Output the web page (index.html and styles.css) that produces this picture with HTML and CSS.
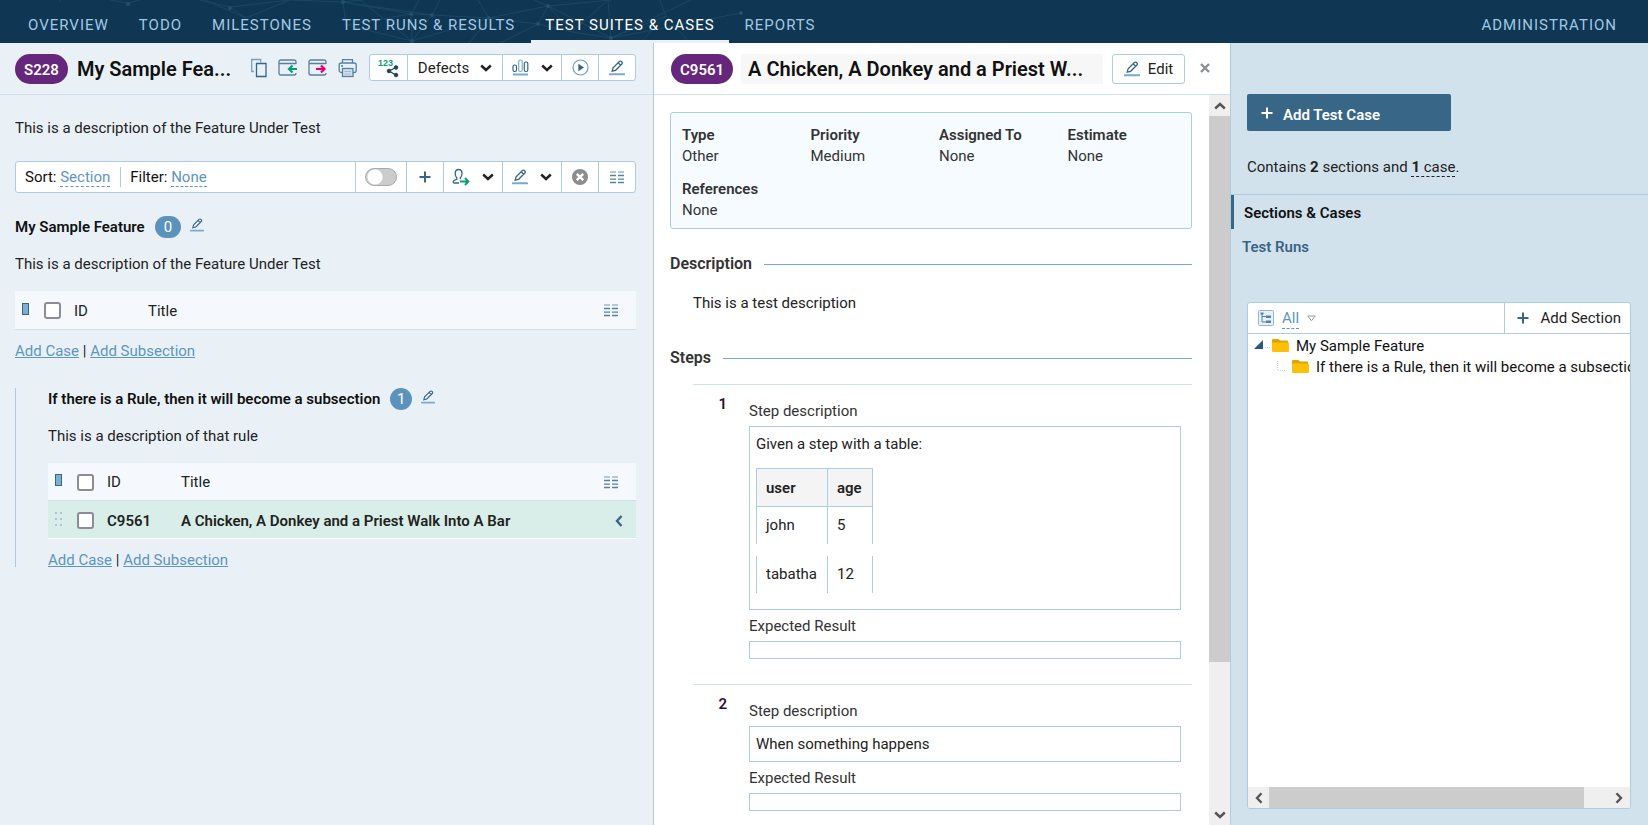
FILE: index.html
```html
<!DOCTYPE html>
<html lang="en">
<head>
<meta charset="utf-8">
<title>My Sample Feature</title>
<link rel="stylesheet" href="styles.css">
</head>
<body>
<svg class="sprite" aria-hidden="true">
  <symbol id="pencil" viewBox="0 0 16 16"><path d="M3.200 11.200l.9-3.400 6.300-6.300a1.400 1.400 0 0 1 2 0l.5.5a1.400 1.400 0 0 1 0 2l-6.300 6.300zM9.200 2.800l2.400 2.400" fill="none" stroke="#376687" stroke-width="1.300"/><path d="M.8 14.300h14.400" stroke="#79aacf" stroke-width="2" stroke-linecap="round"/></symbol>
  <symbol id="chev" viewBox="0 0 12 8"><path d="M1.200 1.500L6 6l4.800-4.500" fill="none" stroke="currentColor" stroke-width="2.400"/></symbol>
  <symbol id="plus" viewBox="0 0 12 12"><path d="M6 .5v11M.5 6h11" stroke="currentColor" stroke-width="2"/></symbol>
  <symbol id="cols" viewBox="0 0 14 13"><path d="M0 1h6M8 1h6" stroke="#9db9cd" stroke-width="1.500"/><path d="M0 4.500h6M8 4.500h6M0 8.200h6M8 8.200h6M0 11.500h6M8 11.500h6" stroke="#56819f" stroke-width="1.300"/></symbol>
  <symbol id="folder" viewBox="0 0 17 13"><path d="M0 1.200Q0 0 1 0h5.500L8 1.500h7q1 0 1 1V5H0z" fill="#dba507"/><path d="M0 3.500h16q1 0 1 1V12q0 1-1 1H1q-1 0-1-1z" fill="#fdc005"/></symbol>
</svg>

<header class="topbar">
  <svg class="mesh" viewBox="0 0 745 43" aria-hidden="true">
    <g fill="none" stroke="#235270" stroke-width="1">
      <path d="M60 0v2M110 0l18 3 12-3M200 0l30 7 60-7M205 0l41 18 44-18M230 7l16 11M290 0l53 2 20-2M343 2l68 12 21 1 57 3 49 6M343 2l3 23 66 16M343 2l89 13M346 25l65-11 8-14M411 14l1 27 20-26M412 41L360 0M412 41l77-23M432 15l8-15M489 18l59-12 63 32M489 18L478 0M489 18l-20 25M538 24l34 8 39 6M538 24l10-18 24 26 36-32M548 6l63-6M548 6l-14-6M611 38l130-25M611 38l80-38M611 38L608 0M611 38l55-22 24 27M666 16L660 0M666 16l-26 27M500 43l38-19"/>
    </g>
    <g fill="#2e6184"><circle cx="128" cy="4" r="2"/><circle cx="230" cy="8" r="2"/><circle cx="343" cy="2" r="2"/><circle cx="411" cy="14" r="2"/><circle cx="432" cy="15" r="2"/><circle cx="412" cy="41" r="2"/><circle cx="489" cy="18" r="2"/><circle cx="538" cy="24" r="2"/><circle cx="548" cy="6" r="2"/><circle cx="611" cy="38" r="2"/><circle cx="741" cy="13" r="2"/></g>
  </svg>
  <nav class="nav">
    <a href="#">OVERVIEW</a><a href="#">TODO</a><a href="#">MILESTONES</a><a href="#">TEST RUNS &amp; RESULTS</a><a href="#" class="current">TEST SUITES &amp; CASES</a><a href="#">REPORTS</a>
  </nav>
  <nav class="nav"><a href="#">ADMINISTRATION</a></nav>
</header>

<main class="columns">
  <section class="suite">
    <div class="bar">
      <span class="tag">S228</span>
      <h1>My Sample Fea...</h1>
      <div class="tools">
        <button aria-label="Copy"><svg width="18" height="20" viewBox="0 0 18 20"><g fill="none" stroke="#376687" stroke-width="1.300"><path d="M4 13.500H1.700V1.500h9v3" stroke="#79a0bd"/><path d="M6.500 5.500h9.500v13H6.500z"/></g></svg></button>
        <button aria-label="Import"><svg width="20" height="18" viewBox="0 0 20 18"><path d="M18 5V3q0-2-2-2H3Q1 1 1 3v11q0 2 2 2h13q2 0 2-2M1 4.500h17" fill="none" stroke="#56819f" stroke-width="1.300"/><path d="M19 10h-7M14.500 6.500L11 10l3.500 3.500" fill="none" stroke="#0b9c78" stroke-width="2.200"/></svg></button>
        <button aria-label="Export"><svg width="20" height="18" viewBox="0 0 20 18"><path d="M18 5V3q0-2-2-2H3Q1 1 1 3v11q0 2 2 2h13q2 0 2-2M1 4.500h17" fill="none" stroke="#56819f" stroke-width="1.300"/><path d="M8 10h8M13 6.500l3.500 3.500-3.500 3.500" fill="none" stroke="#e8006e" stroke-width="2.200"/></svg></button>
        <button aria-label="Print"><svg width="20" height="20" viewBox="0 0 20 20"><g fill="none" stroke="#56819f" stroke-width="1.300"><path d="M4.500 5V1.700h10V5"/><rect x="1.200" y="5" width="17" height="9.500" rx="2"/><rect x="4.500" y="10.500" width="10.500" height="8" fill="#cfe0ec"/></g><path d="M6.500 13.500h6.500M6.500 16h6.500" stroke="#9dbbd2"/><circle cx="4" cy="8" r="1" fill="#0b9c78"/></svg></button>
      </div>
      <div class="group">
        <button class="cell" aria-label="Numbering"><svg width="22" height="20" viewBox="0 0 22 20"><text x="0" y="8" class="digits">123</text><g fill="#23455c" stroke="#23455c"><circle cx="11" cy="13" r="1.800"/><circle cx="18" cy="9.500" r="1.800"/><circle cx="18" cy="17" r="1.800"/><path d="M18 9.500L11 13l7 4" fill="none" stroke-width="1.300"/></g></svg></button>
        <button class="cell wide">Defects<svg width="12" height="8"><use href="#chev"/></svg></button>
        <button class="cell mid" aria-label="Statistics"><svg width="17" height="17" viewBox="0 0 17 17"><g fill="none" stroke="#376687" stroke-width="1.200"><rect x="1" y="6" width="3.500" height="6.500" rx="1.500"/><rect x="6.700" y="1" width="3.500" height="11.500" rx="1.500" stroke="#79aacf"/><rect x="12.300" y="3" width="3.500" height="9.500" rx="1.500"/></g><path d="M1 15.500h15" stroke="#79aacf" stroke-width="2"/></svg><svg width="12" height="8"><use href="#chev"/></svg></button>
        <button class="cell" aria-label="Run test"><svg width="17" height="17" viewBox="0 0 17 17"><circle cx="8.500" cy="8.500" r="7.500" fill="none" stroke="#6b9fc4" stroke-width="1.200"/><path d="M6.300 4.700l5.700 3.800-5.700 3.800z" fill="#376687"/></svg></button>
        <button class="cell" aria-label="Edit suite"><svg width="16" height="16"><use href="#pencil"/></svg></button>
      </div>
    </div>

    <div class="suite-body">
      <p>This is a description of the Feature Under Test</p>
      <div class="group filterbar">
        <div class="filters"><span>Sort: <a href="#">Section</a></span><span class="split">Filter: <a href="#">None</a></span></div>
        <label class="cell toggle" aria-label="Show details"><input type="checkbox"><span></span></label>
        <button class="cell ink" aria-label="Add"><svg width="12" height="12"><use href="#plus"/></svg></button>
        <button class="cell mid" aria-label="Assign"><svg width="18" height="18" viewBox="0 0 18 18"><path d="M7 15H2.500Q1 15 1.300 13.300 1.800 12 4.800 11.300V9.800Q3.200 8.200 3.200 5.500 3.200 1.500 6.600 1.500T10 5.500Q10 8.200 8.400 9.800v1.400" fill="none" stroke="#376687" stroke-width="1.300"/><path d="M8 13.500h8M13 10l3.300 3.500L13 17" fill="none" stroke="#0b9c78" stroke-width="2"/></svg><svg width="12" height="8"><use href="#chev"/></svg></button>
        <button class="cell mid" aria-label="Edit cases"><svg width="16" height="16"><use href="#pencil"/></svg><svg width="12" height="8"><use href="#chev"/></svg></button>
        <button class="cell" aria-label="Clear"><svg width="16" height="16" viewBox="0 0 16 16"><circle cx="8" cy="8" r="8" fill="#8d8d8d"/><path d="M4.800 4.800l6.400 6.400M11.200 4.800l-6.400 6.400" stroke="#fff" stroke-width="2.400"/></svg></button>
        <button class="cell" aria-label="Columns"><svg width="14" height="13"><use href="#cols"/></svg></button>
      </div>

      <div class="head"><h2>My Sample Feature</h2><span class="count">0</span><button aria-label="Edit section"><svg width="14" height="14"><use href="#pencil"/></svg></button></div>
      <p>This is a description of the Feature Under Test</p>
      <table class="cases">
        <thead><tr><th class="c-grip"><i class="handle"></i></th><th class="c-check"><input type="checkbox" aria-label="Select all"></th><th class="c-id">ID</th><th>Title</th><th class="c-end"><svg width="14" height="13"><use href="#cols"/></svg></th></tr></thead>
      </table>
      <div class="links"><a href="#">Add Case</a> | <a href="#">Add Subsection</a></div>

      <section class="sub">
        <div class="head"><h2>If there is a Rule, then it will become a subsection</h2><span class="count">1</span><button aria-label="Edit section"><svg width="14" height="14"><use href="#pencil"/></svg></button></div>
        <p>This is a description of that rule</p>
        <table class="cases">
          <thead><tr><th class="c-grip"><i class="handle"></i></th><th class="c-check"><input type="checkbox" aria-label="Select all"></th><th class="c-id">ID</th><th>Title</th><th class="c-end"><svg width="14" height="13"><use href="#cols"/></svg></th></tr></thead>
          <tbody><tr><td class="c-grip"><svg width="8" height="14" viewBox="0 0 8 14"><g fill="#a9c6de"><path d="M0 0h2v2H0zM5 0h2v2H5zM0 6h2v2H0zM5 6h2v2H5zM0 12h2v2H0zM5 12h2v2H5z"/></g></svg></td><td><input type="checkbox" aria-label="Select C9561"></td><td>C9561</td><td>A Chicken, A Donkey and a Priest Walk Into A Bar</td><td class="c-end open"><svg width="8" height="12" viewBox="0 0 8 12"><path d="M6.500 1L2 6l4.500 5" fill="none" stroke="#376687" stroke-width="2.400"/></svg></td></tr></tbody>
        </table>
        <div class="links"><a href="#">Add Case</a> | <a href="#">Add Subsection</a></div>
      </section>
    </div>
  </section>

  <section class="case">
    <div class="bar">
      <span class="tag">C9561</span>
      <h1 class="case-title">A Chicken, A Donkey and a Priest W...</h1>
      <button class="edit"><svg width="16" height="16"><use href="#pencil"/></svg>Edit</button>
      <button class="close" aria-label="Close"><svg width="10" height="10" viewBox="0 0 10 10"><path d="M1 1l8 8M9 1L1 9" stroke="#8b8f92" stroke-width="2.400"/></svg></button>
    </div>
    <div class="case-view">
      <div class="case-body">
        <dl class="facts">
          <div><dt>Type</dt><dd>Other</dd></div><div><dt>Priority</dt><dd>Medium</dd></div><div><dt>Assigned To</dt><dd>None</dd></div><div><dt>Estimate</dt><dd>None</dd></div><div><dt>References</dt><dd>None</dd></div>
        </dl>
        <h3>Description</h3>
        <p class="text">This is a test description</p>
        <h3>Steps</h3>
        <ol class="steps">
          <li><b>1</b><div>
            <h4>Step description</h4>
            <div class="box"><p>Given a step with a table:</p>
              <div class="grids">
                <table class="grid"><thead><tr><th>user</th><th>age</th></tr></thead><tbody><tr><td>john</td><td>5</td></tr><tr class="spacer"></tr><tr><td>tabatha</td><td>12</td></tr></tbody></table>
              </div></div>
            <h4>Expected Result</h4><div class="box"></div>
          </div></li>
          <li><b>2</b><div>
            <h4>Step description</h4>
            <div class="box"><p>When something happens</p></div>
            <h4>Expected Result</h4><div class="box"></div>
          </div></li>
        </ol>
      </div>
      <div class="scroll vertical"><span><svg width="12" height="8"><use href="#chev"/></svg></span><i></i><span><svg width="12" height="8"><use href="#chev"/></svg></span></div>
    </div>
  </section>

  <aside class="side">
    <button class="add"><svg width="12" height="12"><use href="#plus"/></svg><span>Add Test Case</span></button>
    <p>Contains <b>2</b> sections and <span class="dotted"><b>1</b> case</span>.</p>
    <nav class="menu"><a href="#" class="current">Sections &amp; Cases</a><a href="#">Test Runs</a></nav>
    <div class="tree">
      <div class="tree-bar">
        <div class="scope"><svg width="16" height="16" viewBox="0 0 16 16"><rect x=".5" y=".5" width="15" height="15" rx="1" fill="#e9f1f8" stroke="#8fb6d3"/><path d="M4 3v9h4M4 6.500h4" fill="none" stroke="#56819f"/><path d="M2.500 2.500h3v2h-3zM8 5.500h5v2.500H8zM8 10.500h5V13H8z" fill="#56819f"/></svg><a href="#">All</a><svg width="9" height="7" viewBox="0 0 9 7"><path d="M.8 1h7.400L4.500 5.800z" fill="none" stroke="#999"/></svg></div>
        <button><svg width="12" height="12"><use href="#plus"/></svg>Add Section</button>
      </div>
      <ul>
        <li><svg width="18" height="12" viewBox="0 0 18 12"><path d="M9 0v9H0z" fill="#2a5878"/><path d="M11 7.500h6" stroke="#c3d5e4" stroke-dasharray="1 1"/></svg><svg width="17" height="13"><use href="#folder"/></svg>My Sample Feature</li>
        <li class="child"><svg width="18" height="12" viewBox="0 0 18 12"><path d="M3.500 0v9.500h8" fill="none" stroke="#c3d5e4" stroke-dasharray="1 1"/></svg><svg width="17" height="13"><use href="#folder"/></svg>If there is a Rule, then it will become a subsection</li>
      </ul>
      <div class="scroll horizontal"><span><svg width="12" height="8"><use href="#chev"/></svg></span><i></i><span><svg width="12" height="8"><use href="#chev"/></svg></span></div>
    </div>
  </aside>
</main>
</body>
</html>
```
FILE: styles.css
```css
* { box-sizing: border-box; }
body { margin: 0; height: 100vh; display: flex; flex-direction: column; overflow: hidden; font: 15px/20px Roboto, "Liberation Sans", sans-serif; color: #222; background: #e9f1f7; }
h1, h2, h3, h4, p, dl, dd, ol, ul { margin: 0; padding: 0; list-style: none; }
button { font: inherit; color: inherit; background: none; border: 0; padding: 0; display: flex; align-items: center; }
svg { flex: none; display: block; }
.sprite { position: absolute; width: 0; height: 0; }

.topbar { position: relative; flex: none; height: 43px; background: #0f3753; display: flex; justify-content: space-between; padding: 0 17px 0 14px; }
.mesh { position: absolute; left: 0; top: 0; width: 745px; height: 43px; opacity: .6; }
.nav { position: relative; display: flex; gap: 2px; }
.nav a { display: flex; align-items: center; padding: 10px 14px 0; color: #a3c8e3; text-decoration: none; letter-spacing: 1px; border-bottom: 3px solid transparent; }
.nav a.current { color: #fff; border-color: #e9f1f7; }

.columns { flex: 1; min-height: 0; display: grid; grid-template-columns: minmax(0, 654fr) minmax(0, 577fr) minmax(0, 417fr); }
.suite { border-right: 1px solid #aecbe0; }
.bar { height: 52px; display: flex; align-items: flex-start; padding: 11px 17px 0 15px; border-bottom: 1px solid #cfe0ec; }
.tag { flex: none; height: 30px; padding: 0 9px; border-radius: 15px; background: #66267b; color: #fff; font-weight: 600; line-height: 32px; }
h1 { font-size: 20px; line-height: 30px; font-weight: 600; color: #111; white-space: nowrap; overflow: hidden; text-overflow: ellipsis; }
.suite h1 { flex: 1; min-width: 0; margin: 0 10px 0 9px; }
.tools { display: flex; gap: 10px; height: 28px; margin-right: 11px; }

.group { display: flex; background: #fff; border: 1px solid #aecbe0; border-radius: 3px; height: 27px; }
.cell { width: 37px; justify-content: center; border-left: 1px solid #aecbe0; gap: 12px; display: flex; align-items: center; }
.cell:first-child { border-left: 0; }
.cell.wide { width: 95px; gap: 11px; }
.cell.mid { width: 59px; }
.cell.ink { color: #376687; }
.digits { font: 700 9px "Liberation Sans", sans-serif; fill: #0b9c78; }

.suite-body { padding: 23px 17px 0 15px; }
.filterbar { height: 32px; margin: 23px 0; }
.filters { flex: 1; display: flex; align-items: center; padding-left: 9px; color: #111; }
.split { margin-left: 10px; padding-left: 9px; border-left: 1px solid #aecbe0; }
.filters a, .scope a { color: #5d96c0; text-decoration: none; border-bottom: 1px dashed #5d96c0; }
.toggle { width: 51px; }
.toggle input { position: absolute; opacity: 0; }
.toggle span { width: 32px; height: 18px; border: 1px solid #aaa; border-radius: 9px; background: radial-gradient(circle at 9px 8px, #fff 7px, #ccc 8px); }

.head { display: flex; align-items: center; height: 22px; }
h2 { font-size: 15px; font-weight: 600; color: #111; }
.count { margin: 0 9px 0 10px; min-width: 22px; height: 22px; padding: 0 9px; border-radius: 11px; background: #5b93bd; color: #fff; text-align: center; line-height: 22px; }
.sub .count { padding: 0; }
.head button { padding-bottom: 4px; }
.head + p { margin: 16px 0 17px; }
.cases { width: 100%; border-collapse: collapse; table-layout: fixed; }
.cases th, .cases td { height: 38px; padding: 2px 0 0; text-align: left; font-weight: 400; border-bottom: 1px solid #cfe0ec; }
.cases th { background: #f5f9fd; }
.cases td { background: #d9eee9; font-weight: 600; border-color: #fff; }
.cases .c-grip { width: 29px; padding: 0 0 2px 7px; }
.c-check { width: 30px; }
.c-id { width: 74px; }
.cases .c-end { width: 40px; padding-left: 8px; }
.cases .open { padding-left: 19px; }
.handle { display: block; width: 7px; height: 12px; background: #7fafd0; border: 1px solid #376687; }
.cases input { appearance: none; display: block; margin: 0; width: 17px; height: 17px; border: 2px solid #8d8a9a; border-radius: 3px; background: #fff; }
.links { margin-top: 14px; line-height: 14px; }
.links a { color: #5d96c0; }
.sub { margin-top: 30px; padding-left: 32px; border-left: 1px solid #aecbe0; }

.case { background: #fff; border-right: 1px solid #aecbe0; display: flex; flex-direction: column; min-height: 0; }
.case .bar { flex: none; padding: 11px 20px 0 17px; }
.case-title { flex: 1; min-width: 0; margin: 0 9px 0 8px; padding: 0 7px; background: #f7f7f7; }
.edit { height: 30px; width: 73px; justify-content: center; gap: 8px; border: 1px solid #aecbe0; border-radius: 3px; }
.close { height: 28px; margin-left: 15px; }
.case-view { flex: 1; min-height: 0; display: flex; }
.case-body { flex: 1; min-width: 0; overflow: hidden; padding: 17px 17px 0 16px; }
.facts { display: grid; grid-template-columns: repeat(4, 1fr); gap: 12px 5px; padding: 12px 0 7px 11px; border: 1px solid #aecbe0; border-radius: 3px; background: #f5fbff; color: #333; }
.facts dt { font-weight: 600; line-height: 21px; }
.facts dd { line-height: 21px; }
h3 { display: flex; align-items: center; gap: 12px; font-size: 16px; font-weight: 600; color: #333; margin: 25px 0 0; }
h3::after { content: ""; flex: 1; height: 1px; background: #79aacf; }
.text { padding: 19px 0 10px 23px; }
.steps { padding: 16px 0 0 23px; }
.steps li { display: flex; padding: 9px 11px 25px 0; border-top: 1px solid #cfe0ec; }
.steps b { flex: none; width: 34px; text-align: right; color: #301030; margin-right: 22px; font-weight: 600; }
.steps li > div { flex: 1; min-width: 0; padding-top: 7px; }
h4 { font-size: 15px; font-weight: 400; color: #333; margin-bottom: 5px; }
.box { min-height: 18px; border: 1px solid #aecbe0; padding: 0 6px; margin-bottom: 6px; }
.box:last-child { margin-bottom: 0; }
.box p { padding: 7px 0; }
.grids { padding: 7px 0 16px; }
.grid { border-collapse: collapse; color: #222; }
.grid th, .grid td { height: 37px; padding: 0 10px 0 9px; text-align: left; border: 1px solid #aecbe0; }
.grid th { background: #f4f4f4; font-weight: 600; height: 38px; }
.grid td { border-bottom: 0; }
.grid tr + tr td { border-top: 0; }
.grid .spacer { height: 12px; }

.scroll { display: flex; background: #efefef; color: #555; flex: none; }
.scroll span { width: 21px; height: 21px; display: flex; align-items: center; justify-content: center; }
.scroll i { background: #ccc; }
.vertical { flex-direction: column; width: 21px; }
.vertical i { flex: 546; }
.vertical span:last-child { flex: 163; align-items: flex-end; }
.vertical span:last-child svg { margin-bottom: 6px; }
.vertical span:first-child svg { transform: rotate(180deg); }
.horizontal i { flex: 315; }
.horizontal span:last-child { flex: 46; justify-content: flex-end; }
.horizontal span:first-child svg { transform: rotate(90deg); }
.horizontal span:last-child svg { transform: rotate(-90deg); margin-right: 5px; }

.side { background: #d2e2ed; display: flex; flex-direction: column; min-height: 0; padding: 51px 0 16px; }
.add { height: 37px; width: 204px; margin-left: 16px; flex: none; gap: 10px; padding: 0 14px; border-radius: 2px; background: #376687; color: #fff; font-weight: 600; }
.add span { padding-top: 4px; }
.side p { padding: 26px 16px 17px; }
.dotted { border-bottom: 1px dashed #222; }
.menu { border-top: 1px solid #aecbe0; display: flex; flex-direction: column; font-weight: 600; }
.menu a { height: 34px; line-height: 36px; padding-left: 11px; color: #376687; text-decoration: none; }
.menu .current { color: #111; border-left: 3px solid #376687; padding-left: 10px; }
.tree { flex: 1; min-height: 0; margin: 39px 17px 0 16px; border: 1px solid #aecbe0; border-radius: 3px; background: #fff; display: flex; flex-direction: column; overflow: hidden; }
.tree-bar { display: flex; height: 31px; flex: none; border-bottom: 1px solid #aecbe0; }
.scope { flex: 1; display: flex; align-items: center; gap: 8px; padding-left: 10px; }
.tree-bar button { border-left: 1px solid #aecbe0; padding: 0 9px 0 12px; gap: 11px; }
.tree-bar button svg { color: #376687; }
.tree ul { flex: 1; overflow: hidden; padding: 1px 0 0 6px; white-space: nowrap; color: #111; }
.tree li { display: flex; align-items: center; height: 21px; }
.tree li svg + svg { margin-right: 7px; }
.tree .child { padding-left: 20px; }
```
